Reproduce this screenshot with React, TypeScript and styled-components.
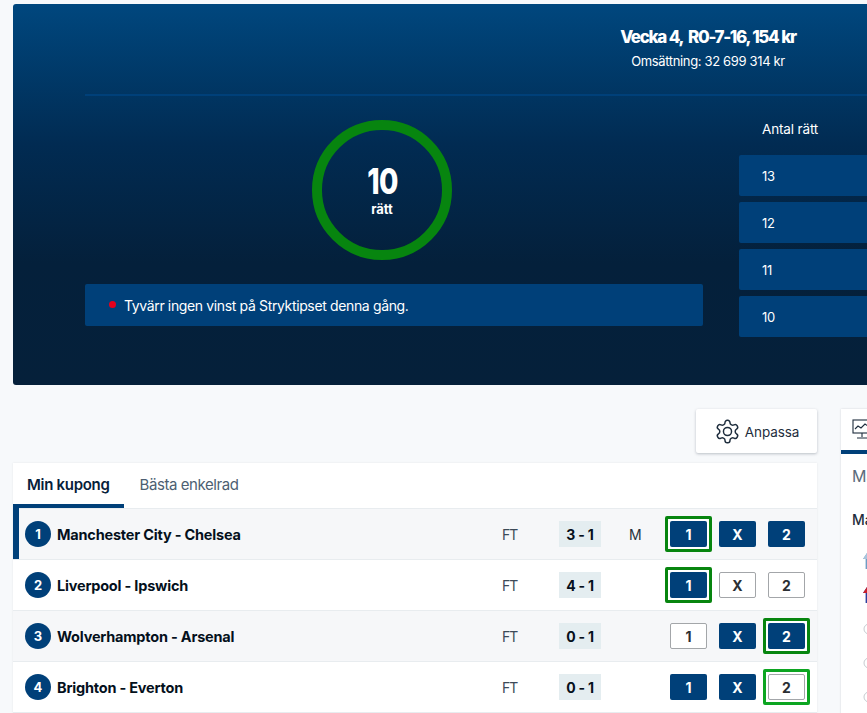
import React from "react";
import styled, { createGlobalStyle } from "styled-components";

const Global = createGlobalStyle`
  html, body { margin: 0; padding: 0; background: #f7f9fb; overflow: hidden; }
  body { width: 867px; height: 713px; font-family: Inter, "Noto Sans", "Liberation Sans", sans-serif; color: #001428; }
`;

const Page = styled.div`
  width: 867px;
  height: 713px;
  overflow: hidden;
  padding: 4px 0 0 13px;
  box-sizing: border-box;
`;

const Hero = styled.section`
  width: 900px;
  height: 381px;
  border-radius: 3px 0 0 3px;
  background: linear-gradient(180deg, #00477e 0%, #012b52 37%, #04203b 68%, #05203a 100%);
  padding: 0 0 0 72px;
  box-sizing: border-box;
`;

const HeroHead = styled.header`
  height: 90px;
  width: 830px;
  border-bottom: 2px solid #004079;
  display: flex;
  flex-direction: column;
  align-items: flex-start;
`;

const HeadBox = styled.div`
  margin-left: 528px;
  padding-top: 21px;
  width: 190px;
  text-align: center;
  color: #fff;
`;

const DrawTitle = styled.div`
  font-size: 17px;
  line-height: 24px;
  font-weight: 800;
  letter-spacing: -1.35px;
  word-spacing: 0.5px;
  white-space: nowrap;
`;

const DrawSub = styled.div`
  font-size: 13px;
  line-height: 20px;
  margin-top: 2px;
  letter-spacing: -0.35px;
  white-space: nowrap;
`;

const HeroBody = styled.div`
  display: flex;
  align-items: flex-start;
`;

const ResultCol = styled.div`
  width: 618px;
  flex: none;
  display: flex;
  flex-direction: column;
  align-items: center;
`;

const Ring = styled.div`
  width: 140px;
  height: 140px;
  margin: 24px 24px 0 0;
  border: 10px solid #07850f;
  border-radius: 50%;
  box-sizing: border-box;
  display: flex;
  flex-direction: column;
  align-items: center;
  justify-content: center;
  color: #fff;
`;

const Count = styled.div`
  font-size: 36px;
  line-height: 30px;
  font-weight: 800;
  letter-spacing: -1px;
  margin-top: 1px;
  transform: scaleX(0.78);
`;

const CountLabel = styled.div`
  font-size: 13px;
  line-height: 14px;
  font-weight: 700;
  margin-top: 6px;
`;

const Notice = styled.div`
  width: 100%;
  height: 42px;
  margin-top: 24px;
  border-radius: 2px;
  background: #004079;
  color: #fff;
  display: flex;
  align-items: center;
  gap: 8px;
  padding-left: 24px;
  box-sizing: border-box;
  font-size: 14px;
  letter-spacing: -0.36px;
`;

const RedDot = styled.span`
  width: 7px;
  height: 7px;
  border-radius: 50%;
  background: #e5001c;
  margin-top: -1px;
`;

const PrizeCol = styled.div`
  margin-left: 36px;
  width: 174px;
  flex: none;
  color: #fff;
`;

const PrizeHead = styled.div`
  height: 59px;
  padding: 24px 0 0 23px;
  box-sizing: border-box;
  font-size: 13.5px;
  line-height: 18px;
  letter-spacing: -0.15px;
`;

const PrizeRows = styled.div`
  display: flex;
  flex-direction: column;
  gap: 6px;
`;

const PrizeRow = styled.div`
  height: 41px;
  border-radius: 2px;
  background: #004079;
  display: flex;
  align-items: center;
  padding-left: 23px;
  font-size: 13px;
  letter-spacing: -0.4px;
`;

const Lower = styled.div`
  display: flex;
  align-items: flex-start;
  margin-top: 24px;
  gap: 24px;
`;

const MainCol = styled.div`
  width: 804px;
  flex: none;
`;

const Toolbar = styled.div`
  display: flex;
  justify-content: flex-end;
  height: 44px;
`;

const AdjustButton = styled.button`
  width: 121px;
  height: 44px;
  border: 0;
  border-radius: 2px;
  background: #fff;
  box-shadow: 0 1px 3px rgba(0, 20, 40, 0.25);
  display: flex;
  align-items: center;
  justify-content: center;
  gap: 4px;
  padding: 0;
  font: 400 13.5px Inter, sans-serif;
  letter-spacing: -0.1px;
  color: #1e2d3d;
`;

const AdjustLabel = styled.span`
  padding-top: 2px;
`;

const Coupon = styled.section`
  margin-top: 10px;
  background: #fff;
  box-shadow: 0 0 2px rgba(0, 20, 40, 0.08);
`;

const Tabs = styled.div`
  display: flex;
  gap: 2px;
  height: 45px;
  border-bottom: 1px solid #e8ecef;
`;

const Tab = styled.div<{ $active?: boolean }>`
  height: 45px;
  box-sizing: border-box;
  padding: 1px 14px 0;
  display: flex;
  align-items: center;
  font-size: 15px;
  letter-spacing: ${(p) => (p.$active ? "-0.3px" : "-0.42px")};
  font-weight: ${(p) => (p.$active ? 600 : 400)};
  color: ${(p) => (p.$active ? "#06203a" : "#4d5f72")};
  border-bottom: 4px solid ${(p) => (p.$active ? "#004079" : "transparent")};
`;

const Row = styled.div<{ $shade?: boolean; $current?: boolean }>`
  height: 51px;
  box-sizing: border-box;
  border-bottom: 1px solid #e8ecef;
  background: ${(p) => (p.$shade ? "#f6f7f9" : "#fff")};
  display: flex;
  align-items: center;
  position: relative;
  padding-left: 12px;

  ${(p) =>
    p.$current
      ? `&::before { content: ""; position: absolute; left: 0; top: -1px; bottom: 0; width: 6px; background: #004079; }`
      : ""}
`;

const Num = styled.span`
  width: 26px;
  height: 26px;
  border-radius: 50%;
  background: #004079;
  color: #fff;
  font-size: 13px;
  font-weight: 700;
  display: flex;
  align-items: center;
  justify-content: center;
  flex: none;
`;

const Teams = styled.span`
  margin-left: 6px;
  width: 445px;
  font-size: 14.5px;
  font-weight: 700;
  letter-spacing: -0.2px;
  color: #04101c;
  white-space: nowrap;
`;

const Status = styled.span`
  width: 57px;
  font-size: 14px;
  color: #3c4a58;
  letter-spacing: -0.9px;
`;

const Score = styled.span`
  width: 42px;
  height: 26px;
  background: #e4edf0;
  display: flex;
  align-items: center;
  justify-content: center;
  font-size: 14px;
  font-weight: 700;
  letter-spacing: -0.2px;
  white-space: pre;
  color: #06101c;
`;

const Mark = styled.span`
  width: 69px;
  padding-left: 28px;
  box-sizing: border-box;
  font-size: 14px;
  color: #26323e;
`;

const Signs = styled.div`
  display: flex;
  gap: 12px;
`;

const Sign = styled.span<{ $on?: boolean; $hit?: boolean; $bright?: boolean }>`
  width: 37px;
  height: 26px;
  box-sizing: border-box;
  border-radius: 2px;
  display: flex;
  align-items: center;
  justify-content: center;
  position: relative;
  font-size: 14px;
  font-weight: 700;
  background: ${(p) => (p.$on ? "#004079" : "#fff")};
  color: ${(p) => (p.$on ? "#fff" : "#2b2f33")};
  border: ${(p) => (p.$on ? "0" : "1px solid #a3a6a9")};
  ${(p) =>
    p.$hit
      ? `box-shadow: 0 0 0 2px #fff;
         &::after {
           content: "";
           position: absolute;
           inset: ${p.$on ? "-5px" : "-6px"};
           border: 3px solid ${p.$bright ? "#0ca521" : "#07850f"};
           border-radius: 2px;
         }`
      : ""}
`;

const SidePanel = styled.aside`
  width: 200px;
  flex: none;
  height: 320px;
  background: #fff;
  box-shadow: 0 0 2px rgba(0, 20, 40, 0.15);
`;

const SideTab = styled.div`
  height: 45px;
  box-sizing: border-box;
  border-bottom: 4px solid #004079;
  padding: 9px 0 0 11px;
  color: #1e2d3d;
`;

const SideTabs = styled.div`
  padding: 12px 0 0 11px;
  font-size: 16px;
  line-height: 20px;
  color: #5b6b7a;
`;

const SideLabel = styled.div`
  margin: 25px 0 0 11px;
  font-size: 14px;
  line-height: 18px;
  font-weight: 500;
  color: #1e2d3d;
`;

const SideIcons = styled.div`
  margin: 24px 0 0 22px;
  display: flex;
  flex-direction: column;
  gap: 18px;
`;

const Gear = () => (
  <svg width="27" height="27" viewBox="0 0 24 24" fill="none" stroke="#1e2d3d" strokeWidth="1.3" strokeLinecap="round" strokeLinejoin="round">
    <path d="M12.22 2h-.44a2 2 0 0 0-2 2v.18a2 2 0 0 1-1 1.73l-.43.25a2 2 0 0 1-2 0l-.15-.08a2 2 0 0 0-2.73.73l-.22.38a2 2 0 0 0 .73 2.73l.15.1a2 2 0 0 1 1 1.72v.51a2 2 0 0 1-1 1.74l-.15.09a2 2 0 0 0-.73 2.73l.22.38a2 2 0 0 0 2.73.73l.15-.08a2 2 0 0 1 2 0l.43.25a2 2 0 0 1 1 1.73V20a2 2 0 0 0 2 2h.44a2 2 0 0 0 2-2v-.18a2 2 0 0 1 1-1.73l.43-.25a2 2 0 0 1 2 0l.15.08a2 2 0 0 0 2.73-.73l.22-.39a2 2 0 0 0-.73-2.73l-.15-.08a2 2 0 0 1-1-1.74v-.5a2 2 0 0 1 1-1.74l.15-.09a2 2 0 0 0 .73-2.73l-.22-.38a2 2 0 0 0-2.73-.73l-.15.08a2 2 0 0 1-2 0l-.43-.25a2 2 0 0 1-1-1.73V4a2 2 0 0 0-2-2z" />
    <circle cx="12" cy="12" r="3.6" />
  </svg>
);

const Presentation = () => (
  <svg width="20" height="22" viewBox="0 0 20 22" fill="none" stroke="#1e2d3d" strokeWidth="1.1">
    <rect x="1" y="2" width="18" height="13" />
    <path d="M3 11l3-3 3 2 4-4 3 2" />
    <path d="M10 15v4M5 20h10" />
  </svg>
);

const ArrowUp = ({ color, tail }: { color: string; tail: string }) => (
  <svg width="8" height="16" viewBox="0 0 8 16">
    <path d="M4 0L8 6H5.4V16H2.6V6H0Z" fill={color} />
    <path d="M0 6L4 0V6Z" fill={tail} />
  </svg>
);

const Ball = () => (
  <svg width="8" height="16" viewBox="0 0 8 16" fill="none" stroke="#c6cbd0" strokeWidth="1">
    <circle cx="6" cy="8" r="5" />
    <circle cx="6" cy="8" r="1.5" />
  </svg>
);

type Match = {
  n: number;
  teams: string;
  score: string;
  mark?: string;
  on: [boolean, boolean, boolean];
  hit: number;
  bright?: boolean;
};

const matches: Match[] = [
  { n: 1, teams: "Manchester City - Chelsea", score: "3 - 1", mark: "M", on: [true, true, true], hit: 0 },
  { n: 2, teams: "Liverpool - Ipswich", score: "4 - 1", on: [true, false, false], hit: 0 },
  { n: 3, teams: "Wolverhampton - Arsenal", score: "0 - 1", on: [false, true, true], hit: 2 },
  { n: 4, teams: "Brighton - Everton", score: "0 - 1", on: [true, true, false], hit: 2, bright: true },
];

const signs = ["1", "X", "2"];

export default function App() {
  return (
    <Page>
      <Global />
      <Hero>
        <HeroHead>
          <HeadBox>
            <DrawTitle>Vecka 4, &nbsp;R0-7-16, 154 kr</DrawTitle>
            <DrawSub>Omsättning: 32 699 314 kr</DrawSub>
          </HeadBox>
        </HeroHead>
        <HeroBody>
          <ResultCol>
            <Ring>
              <Count>10</Count>
              <CountLabel>rätt</CountLabel>
            </Ring>
            <Notice>
              <RedDot />
              Tyvärr ingen vinst på Stryktipset denna gång.
            </Notice>
          </ResultCol>
          <PrizeCol>
            <PrizeHead>Antal rätt</PrizeHead>
            <PrizeRows>
              {[13, 12, 11, 10].map((v) => (
                <PrizeRow key={v}>{v}</PrizeRow>
              ))}
            </PrizeRows>
          </PrizeCol>
        </HeroBody>
      </Hero>
      <Lower>
        <MainCol>
          <Toolbar>
            <AdjustButton>
              <Gear />
              <AdjustLabel>Anpassa</AdjustLabel>
            </AdjustButton>
          </Toolbar>
          <Coupon>
            <Tabs>
              <Tab $active>Min kupong</Tab>
              <Tab>Bästa enkelrad</Tab>
            </Tabs>
            {matches.map((m, i) => (
              <Row key={m.n} $shade={i % 2 === 0} $current={i === 0}>
                <Num>{m.n}</Num>
                <Teams>{m.teams}</Teams>
                <Status>FT</Status>
                <Score>{m.score}</Score>
                <Mark>{m.mark}</Mark>
                <Signs>
                  {signs.map((s, k) => (
                    <Sign key={s} $on={m.on[k]} $hit={m.hit === k} $bright={m.bright}>
                      {s}
                    </Sign>
                  ))}
                </Signs>
              </Row>
            ))}
          </Coupon>
        </MainCol>
        <SidePanel>
          <SideTab>
            <Presentation />
          </SideTab>
          <SideTabs>Matcher</SideTabs>
          <SideLabel>Matchinfo</SideLabel>
          <SideIcons>
            <ArrowUp color="#6f9cc4" tail="#a9c4dc" />
            <ArrowUp color="#2a3f9e" tail="#c8202c" />
            <Ball />
            <Ball />
            <Ball />
          </SideIcons>
        </SidePanel>
      </Lower>
    </Page>
  );
}
